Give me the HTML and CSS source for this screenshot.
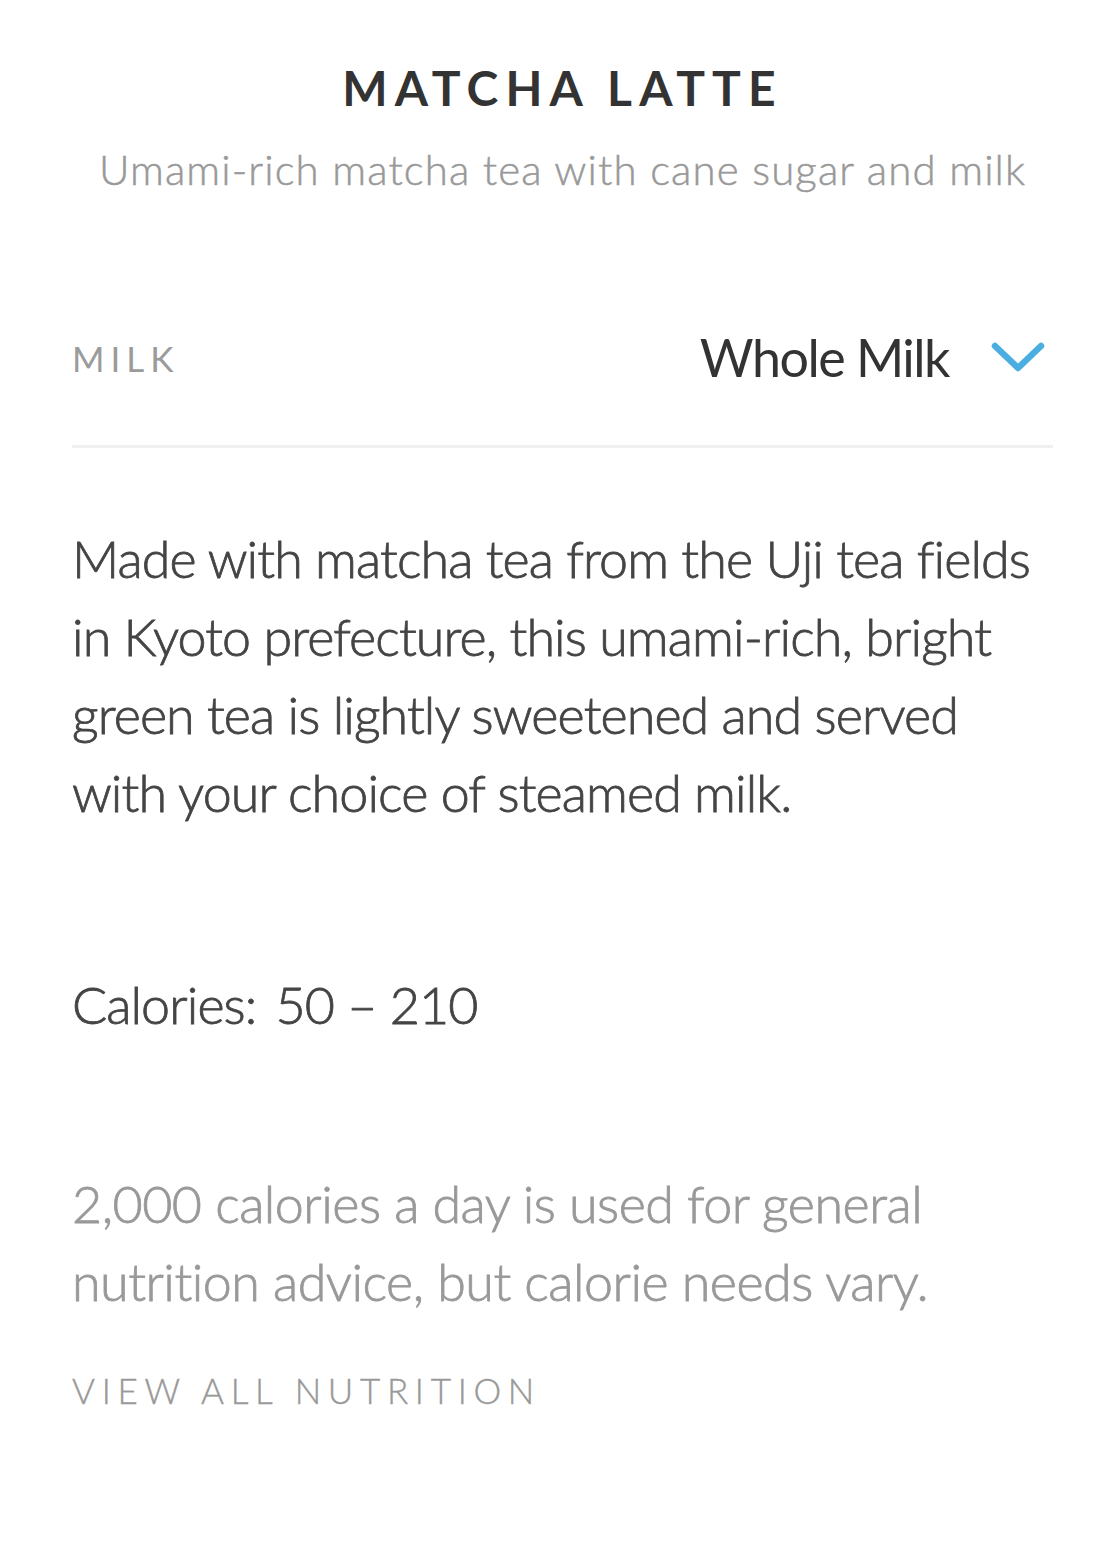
FILE: index.html
```html
<!DOCTYPE html>
<html lang="en">
<head>
<meta charset="utf-8">
<title>Matcha Latte</title>
<link rel="stylesheet" href="styles.css">
</head>
<body>
<main class="product">
  <header class="product-head">
    <h1 class="product-title">MATCHA LATTE</h1>
    <p class="product-sub">Umami-rich matcha tea with cane sugar and milk</p>
  </header>
  <div class="option-row">
    <span class="option-label">MILK</span>
    <button class="option-select" type="button">
      <span class="option-value">Whole Milk</span>
      <svg class="chevron" width="56" height="34" viewBox="0 0 56 34" aria-hidden="true">
        <polyline points="4,6 27,28 50,6" fill="none" stroke="#4aaee0" stroke-width="6.5" stroke-linecap="round" stroke-linejoin="round"/>
      </svg>
    </button>
  </div>
  <p class="description">Made with matcha tea from the Uji tea fields in Kyoto prefecture, this umami-rich, bright green tea is lightly sweetened and served with your choice of steamed milk.</p>
  <p class="calories"><span class="calories-label">Calories:</span> 50 – 210</p>
  <p class="note">2,000 calories a day is used for general nutrition advice, but calorie needs vary.</p>
  <a class="nutrition-link" href="#">VIEW ALL NUTRITION</a>
</main>
</body>
</html>
```

FILE: styles.css
```css
html, body {
  margin: 0;
  padding: 0;
  background: #ffffff;
}

body {
  font-family: "Lato", "Noto Sans", sans-serif;
  font-variant-ligatures: none;
  -webkit-font-smoothing: antialiased;
}

.product {
  display: flex;
  flex-direction: column;
  padding: 58px 60px 0 72px;
}

.product-head {
  display: flex;
  flex-direction: column;
  align-items: center;
}

.product-title {
  margin: 0;
  font-size: 48px;
  line-height: 60px;
  font-weight: 700;
  letter-spacing: 7.1px;
  color: #333333;
}

.product-sub {
  margin: 26px 0 0;
  font-size: 42px;
  line-height: 50px;
  font-weight: 300;
  letter-spacing: 1.1px;
  color: #999999;
  white-space: nowrap;
  -webkit-text-stroke: 0.5px #999999;
}

.option-row {
  margin-top: 74px;
  height: 177px;
  border-bottom: 3px solid #f0f0f0;
  display: flex;
  align-items: center;
  justify-content: space-between;
}

.option-label {
  font-size: 35px;
  letter-spacing: 6px;
  color: #9b9b9b;
  margin-top: 2px;
}

.option-select {
  display: flex;
  align-items: center;
  gap: 42px;
  border: 0;
  background: none;
  padding: 0 6px 0 0;
  font: inherit;
  cursor: pointer;
}

.option-value {
  font-size: 52px;
  letter-spacing: -1.5px;
  color: #333333;
  line-height: 60px;
}

.chevron {
  display: block;
}

.description,
.calories,
.note {
  font-size: 52px;
  line-height: 78px;
  font-weight: 300;
  letter-spacing: -0.9px;
}

.description {
  margin: 71px 0 0;
  color: #444444;
  -webkit-text-stroke: 0.8px #444444;
}

.calories {
  margin: 134px 0 0;
  color: #444444;
  -webkit-text-stroke: 0.8px #444444;
}

.calories-label {
  margin-right: 6px;
}

.note {
  margin: 121px 0 0;
  color: #999999;
  letter-spacing: -0.5px;
  -webkit-text-stroke: 0.8px #999999;
}

.nutrition-link {
  margin-top: 48px;
  font-size: 35px;
  line-height: 44px;
  letter-spacing: 6.7px;
  font-weight: 300;
  color: #999999;
  text-decoration: none;
  align-self: flex-start;
  -webkit-text-stroke: 0.4px #999999;
}
```
